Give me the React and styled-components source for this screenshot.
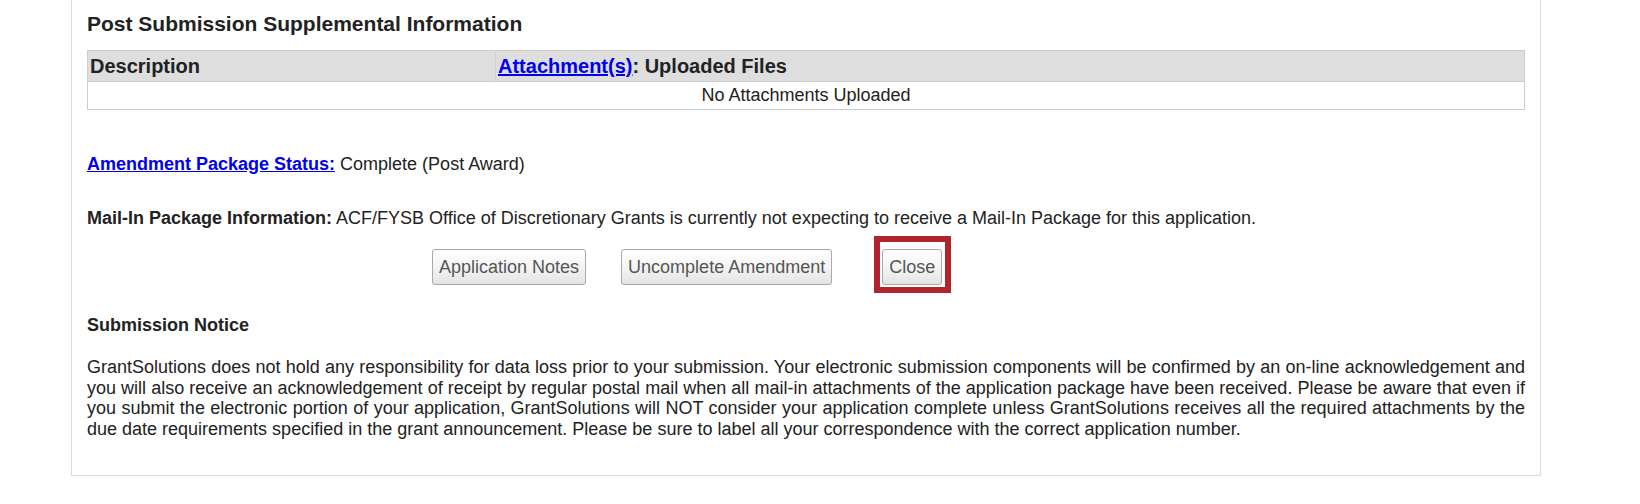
import React from "react";
import styled, { createGlobalStyle } from "styled-components";

const GlobalStyle = createGlobalStyle`
  html, body { margin: 0; padding: 0; background: #fff; }
  body {
    font-family: "Liberation Sans", Arial, sans-serif;
    font-size: 18px;
    color: #222;
  }
`;

const Page = styled.div`
  padding-left: 71px;
`;

const Panel = styled.section`
  box-sizing: border-box;
  width: 1470px;
  border: 1px solid #dcdcdc;
  border-top: none;
  background: #fff;
  padding: 12px 15px 35px 15px;
`;

const Title = styled.h2`
  margin: 0 0 14px 0;
  font-size: 21px;
  line-height: 24px;
  font-weight: bold;
  color: #222;
`;

const Table = styled.table`
  width: 100%;
  border-collapse: collapse;
  border: 1px solid #cccccc;
`;

const Th = styled.th`
  background: #dedede;
  text-align: left;
  font-size: 20px;
  font-weight: bold;
  line-height: 23px;
  padding: 4px 2px 3px 2px;
  color: #222;
  border-left: ${(p) => (p.$divided ? "1px solid #cfcfcf" : "none")};
  width: ${(p) => p.$w || "auto"};
  border-bottom: 1px solid #cccccc;
`;

const Td = styled.td`
  text-align: center;
  padding: 3px 2px 4px 2px;
  line-height: 20px;
  color: #222;
`;

const Link = styled.a`
  color: #0000ee;
  text-decoration: underline;
  font-weight: bold;
`;

const Line = styled.p`
  margin: ${(p) => p.$mt || "0"} 0 0 0;
  line-height: 20px;
`;

const Label = styled.span`
  font-weight: bold;
`;

const Buttons = styled.div`
  display: flex;
  align-items: center;
  gap: 35px;
  margin: 21px 0 0 345px;
`;

const Button = styled.button`
  font-family: "Liberation Sans", Arial, sans-serif;
  font-size: 18px;
  color: #555;
  height: 36px;
  padding: 0 6px;
  border: 1px solid #a9a9a9;
  border-radius: 3px;
  background: linear-gradient(to bottom, #ffffff 0%, #f4f4f4 50%, #e4e4e4 100%);
  cursor: pointer;
`;

const Highlight = styled.span`
  position: relative;
  display: inline-flex;
  margin-left: 15px;

  &::after {
    content: "";
    position: absolute;
    top: -13px;
    left: -8px;
    right: -9px;
    bottom: -8px;
    border: 6px solid #b1242b;
    pointer-events: none;
  }
`;

const Heading = styled.h3`
  margin: 30px 0 0 0;
  font-size: 18px;
  line-height: 20px;
  font-weight: bold;
`;

const Paragraph = styled.p`
  margin: 22px 0 0 0;
  line-height: 20.7px;
  text-align: justify;
`;

export default function App() {
  return (
    <>
      <GlobalStyle />
      <Page>
        <Panel>
          <Title>Post Submission Supplemental Information</Title>
          <Table>
            <thead>
              <tr>
                <Th $w="403px">Description</Th>
                <Th $divided>
                  <Link href="#">Attachment(s)</Link>: Uploaded Files
                </Th>
              </tr>
            </thead>
            <tbody>
              <tr>
                <Td colSpan={2}>No Attachments Uploaded</Td>
              </tr>
            </tbody>
          </Table>
          <Line $mt="44px">
            <Link href="#">Amendment Package Status:</Link> Complete (Post Award)
          </Line>
          <Line $mt="34px">
            <Label>Mail-In Package Information:</Label> ACF/FYSB Office of
            Discretionary Grants is currently not expecting to receive a
            Mail-In Package for this application.
          </Line>
          <Buttons>
            <Button>Application Notes</Button>
            <Button>Uncomplete Amendment</Button>
            <Highlight>
              <Button>Close</Button>
            </Highlight>
          </Buttons>
          <Heading>Submission Notice</Heading>
          <Paragraph>
            GrantSolutions does not hold any responsibility for data loss prior
            to your submission. Your electronic submission components will be
            confirmed by an on-line acknowledgement and you will also receive an
            acknowledgement of receipt by regular postal mail when all mail-in
            attachments of the application package have been received. Please
            be aware that even if you submit the electronic portion of your
            application, GrantSolutions will NOT consider your application
            complete unless GrantSolutions receives all the required
            attachments by the due date requirements specified in the grant
            announcement. Please be sure to label all your correspondence with
            the correct application number.
          </Paragraph>
        </Panel>
      </Page>
    </>
  );
}
